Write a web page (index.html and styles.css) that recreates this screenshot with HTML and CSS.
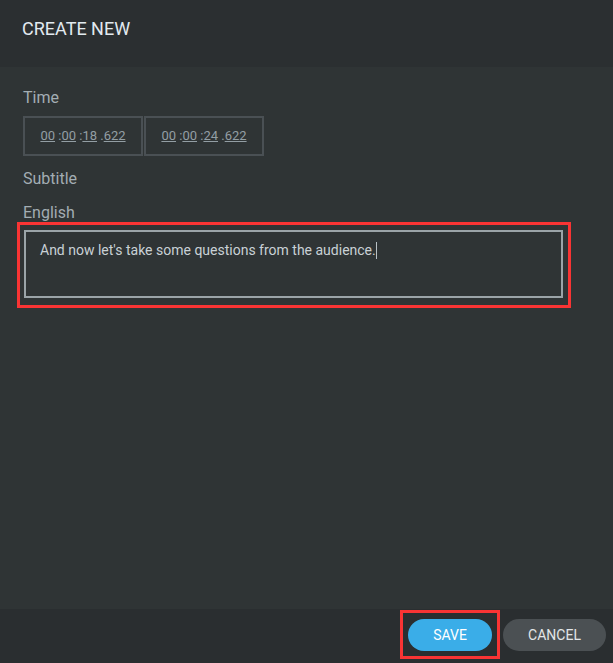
FILE: index.html
```html
<!DOCTYPE html>
<html lang="en">
<head>
    <meta charset="UTF-8">
    <title>Create New</title>
    <link rel="stylesheet" href="styles.css">
</head>
<body>
<div class="dialog">
    <div class="dialog-head">CREATE NEW</div>
    <div class="dialog-body">
        <div class="label">Time</div>
        <div class="times">
            <div class="time-box">
                <span class="seg">00</span> :<span class="seg">00</span> :<span class="seg">18</span> .<span class="seg">622</span>
            </div>
            <div class="time-box">
                <span class="seg">00</span> :<span class="seg">00</span> :<span class="seg">24</span> .<span class="seg">622</span>
            </div>
        </div>
        <div class="label">Subtitle</div>
        <div class="label lang">English</div>
        <div class="mark mark-text">
            <div class="text-area">And now let's take some questions from the audience.<span class="caret"></span></div>
        </div>
    </div>
    <div class="dialog-foot">
        <div class="mark mark-btn">
            <button class="btn btn-save">SAVE</button>
        </div>
        <button class="btn btn-cancel">CANCEL</button>
    </div>
</div>
</body>
</html>
```

FILE: styles.css
```css
html, body { margin: 0; padding: 0; height: 100%; }
body { font-family: Roboto, "Noto Sans", Arial, sans-serif; background: #2f3435; }
.dialog { display: flex; flex-direction: column; height: 100vh; }
.dialog-head { height: 67px; box-sizing: border-box; padding: 18px 22px 0; background: #2b2f31; color: #e2eaf0; font-size: 18px; }
.dialog-body { flex: 1; padding: 20px 23px 0; }
.label { color: #a3adb3; font-size: 16px; line-height: 22px; }
.lang { margin-top: 12px; }
.times { display: flex; margin: 7px 0 12px; }
.time-box { width: 116px; height: 36px; border: 2px solid #4a5054; color: #939ea4; font-size: 13px; line-height: 36px; text-align: center; }
.time-box + .time-box { margin-left: 1px; }
.seg { text-decoration: underline; }
.mark { border: 3px solid #f93434; }
.mark-text { margin: -2px 19px 0 -6px; padding: 5px 5px 7px 4px; }
.text-area { border: 2px solid #9ba4a8; padding: 9px 14px; box-sizing: border-box; height: 68px; color: #c9d1d5; font-size: 14px; line-height: 18px; }
.caret { display: inline-block; width: 1px; height: 17px; background: #b8c0c4; vertical-align: -4px; }
.dialog-foot { height: 54px; background: #2a2e30; display: flex; justify-content: flex-end; align-items: flex-start; padding: 1px 7px 0 0; box-sizing: border-box; }
.mark-btn { padding: 6px 5px 5px 5px; margin-right: 3px; }
.btn { height: 32px; border: none; border-radius: 16px; font-family: inherit; font-size: 14px; padding: 0; cursor: pointer; }
.btn-save { width: 84px; background: #3aade8; color: #ffffff; display: block; }
.btn-cancel { width: 103px; margin-top: 9px; background: #4b5053; color: #e2e6e8; }
```
